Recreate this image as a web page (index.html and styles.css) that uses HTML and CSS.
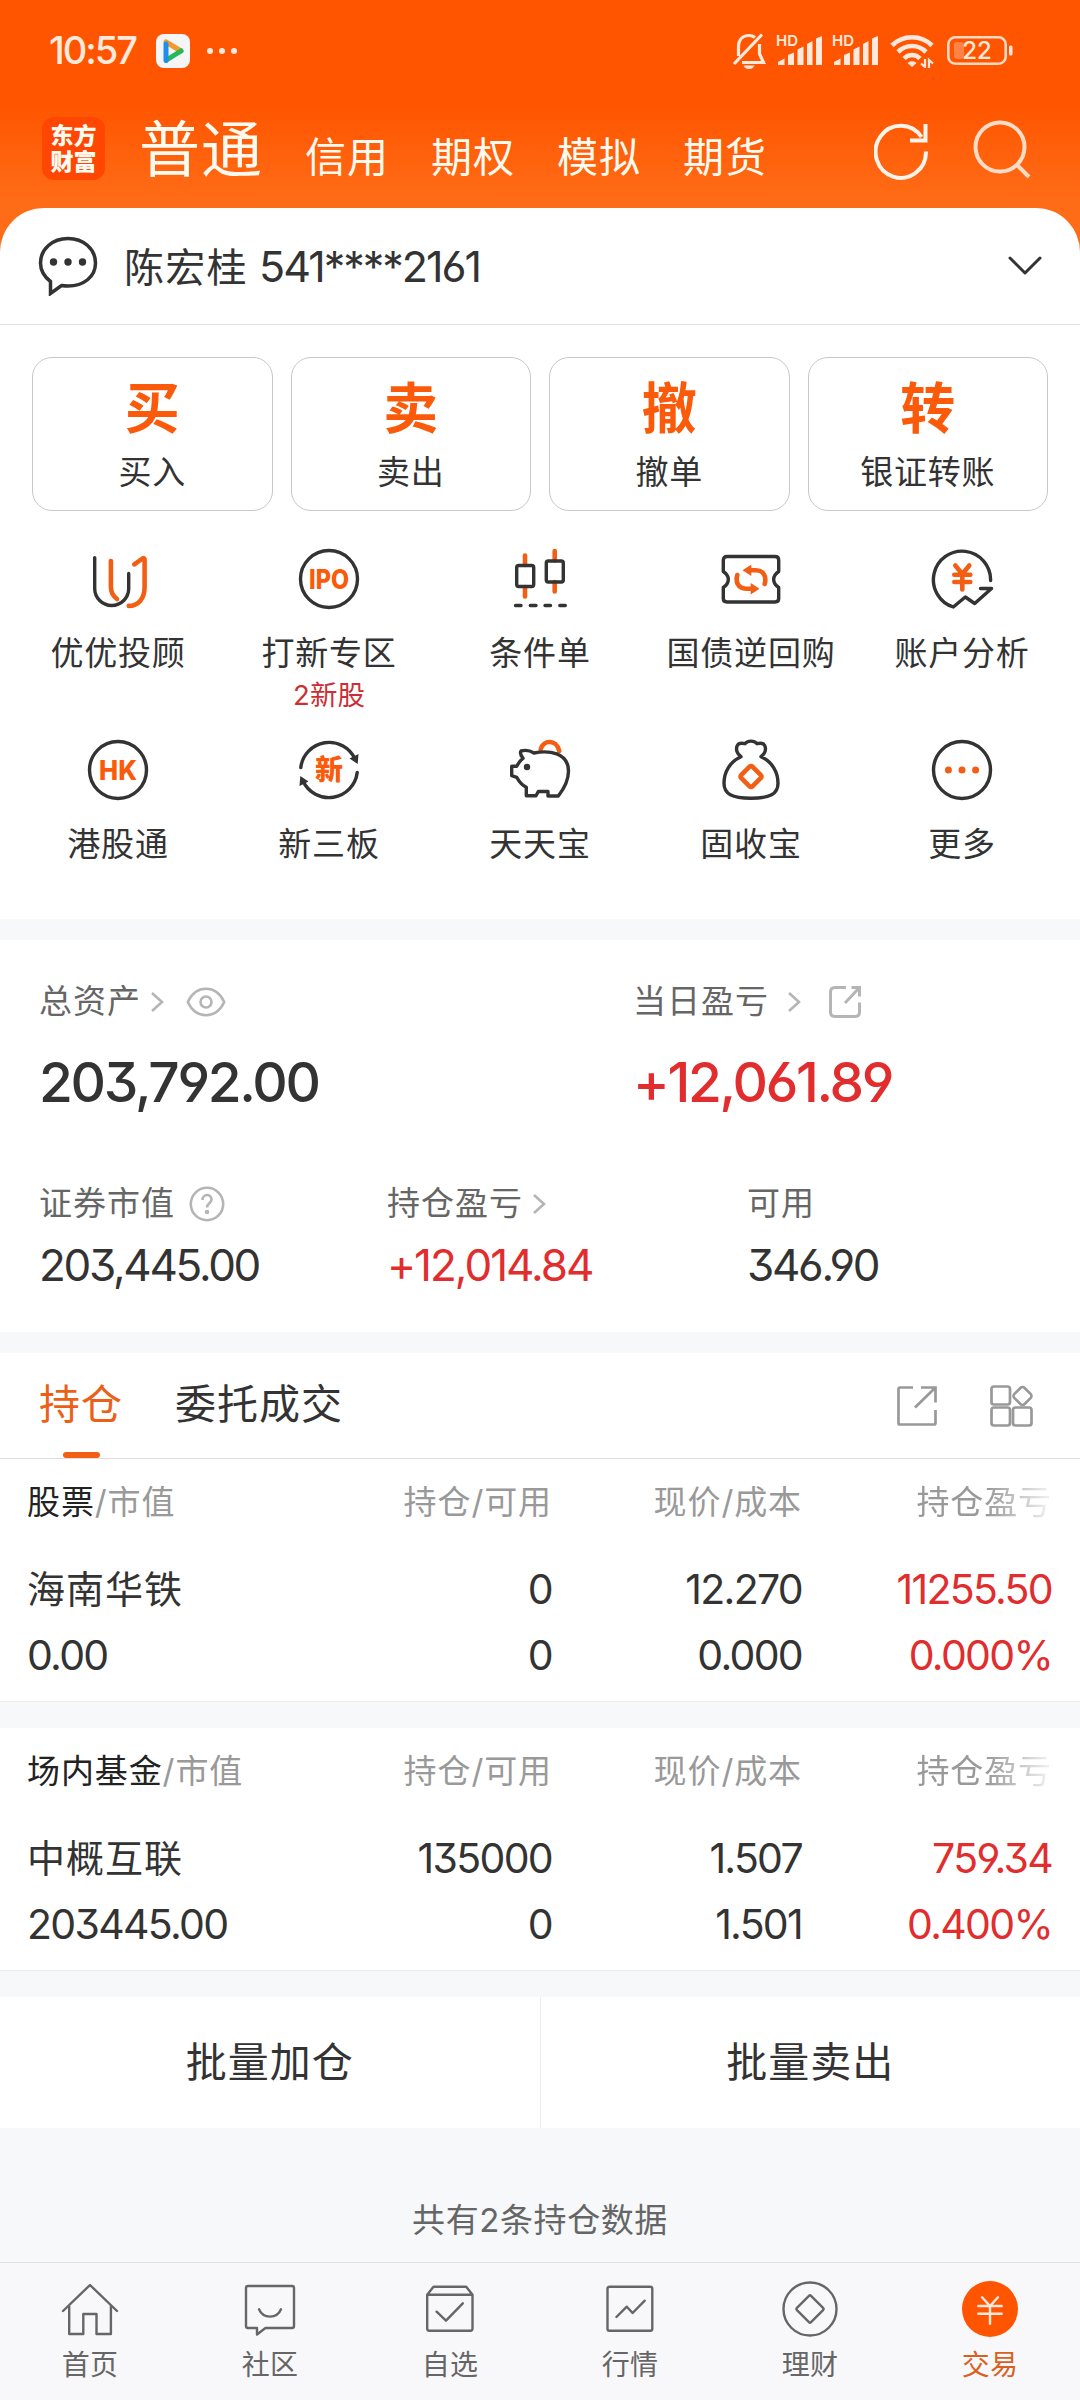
FILE: index.html
```html
<!DOCTYPE html>
<html lang="zh-CN">
<head>
  <meta charset="UTF-8" />
  <title>交易</title>
  <meta name="viewport" content="width=device-width, initial-scale=1.0"/>
  <link rel="stylesheet" href="styles.css">
</head>
<body>
  <!-- 顶部 -->
  <div class="top">
    <div class="status-bar">
      <span class="time">10:57</span>
      <svg class="app-icon" width="34" height="34" viewBox="0 0 34 34">
        <rect width="34" height="34" rx="8" fill="#f3f5f7"/>
        <path d="M10 8L25 17" stroke="#f39a2d" stroke-width="5" stroke-linecap="round"/>
        <path d="M25 17L10.500 26" stroke="#22b95a" stroke-width="5" stroke-linecap="round"/>
        <path d="M10 10V26.500" stroke="#1e8fe8" stroke-width="5" stroke-linecap="round"/>
      </svg>
      <svg class="dots" width="32" height="8" viewBox="0 0 32 8" fill="#ffe9dc">
        <circle cx="4" cy="4" r="3"/><circle cx="16" cy="4" r="3"/><circle cx="28" cy="4" r="3"/>
      </svg>
      <div class="status-right">
        <svg width="34" height="38" viewBox="0 0 34 38" fill="none" stroke="#ffe9dc" stroke-width="3.200">
          <path d="M6.500 24V15C6.500 8 10.500 3.500 17 3.500C19.500 3.500 21.500 4.300 23 5.500M27.500 12V22L31.500 30.500H10M2 32L30 2.500"/>
          <path d="M11.500 33.500H22.500C21.500 36 19.500 37 17 37C14.500 37 12.500 36 11.500 33.500Z" fill="#ffe9dc" stroke="none"/>
        </svg>
        <svg class="signal" width="46" height="38" viewBox="0 -2 46 38" fill="#ffe9dc">
          <text x="0" y="12" class="hd">HD</text>
          <path d="M2 31V28L8.500 24.500V31ZM12 31V21L18 18.500V31ZM21.500 31V15.500L27.500 12.500V31ZM31 31V10L36.500 7V31ZM40 31V4.500L46 2V31Z"/>
        </svg>
        <svg class="signal" width="46" height="38" viewBox="0 -2 46 38" fill="#ffe9dc">
          <text x="0" y="12" class="hd">HD</text>
          <path d="M2 31V28L8.500 24.500V31ZM12 31V21L18 18.500V31ZM21.500 31V15.500L27.500 12.500V31ZM31 31V10L36.500 7V31ZM40 31V4.500L46 2V31Z"/>
        </svg>
        <svg class="wifi" width="44" height="34" viewBox="0 0 44 34" fill="none" stroke="#ffe9dc" stroke-width="4.600">
          <path d="M2 11.500C13 0.500 31 0.500 42 11.500M8 18C16 10 28 10 36 18M14 24.500C18.500 19.800 25.500 19.800 30 24.500"/>
          <path d="M17.500 29C20 26.500 24 26.500 26.500 29L22 33Z" fill="#ffe9dc" stroke="none"/>
          <path d="M35 25V33L31 29.500M39 34V26L43 29.500" stroke-width="2.200"/>
        </svg>
        <svg width="66" height="30" viewBox="0 0 66 30">
          <rect x="1.300" y="1.300" width="57.400" height="26.400" rx="7" fill="none" stroke="#ffd9c3" stroke-width="2.600"/>
          <rect x="7" y="6" width="10" height="17" rx="3" fill="#ff8345"/>
          <rect x="62" y="9.500" width="3.500" height="10" rx="1.500" fill="#ffe9dc"/>
          <text x="30" y="23" class="battery-num">22</text>
        </svg>
      </div>
    </div>

    <div class="header">
      <div class="brand">东方<br>财富</div>
      <div class="account-tabs">
        <span class="current">普通</span>
        <span>信用</span>
        <span>期权</span>
        <span>模拟</span>
        <span>期货</span>
      </div>
      <svg class="refresh" width="56" height="60" viewBox="0 0 56 60" fill="none" stroke="#fff3ea" stroke-width="4">
        <path d="M52 31.500A25.200 26 0 1 1 47.500 17"/>
        <path d="M51.500 4V20.500H36"/>
      </svg>
      <svg class="search" width="58" height="60" viewBox="0 0 58 60" fill="none" stroke="#ffdcc6" stroke-width="4">
        <circle cx="27" cy="27" r="24.500"/>
        <path d="M43 44L56 57"/>
      </svg>
    </div>
  </div>

  <!-- 账户 -->
  <div class="account">
    <svg width="60" height="60" viewBox="0 0 60 60" fill="none" stroke="#333" stroke-width="3.500">
      <path d="M12.500 57.500V45.500C6 40.500 2.500 34 2.500 27C2.500 13 14.500 2.500 30 2.500S57.500 13 57.500 27S45.500 50 30 50C27.500 50 25.500 49.800 23.500 49.500Z"/>
      <g fill="#333" stroke="none"><circle cx="15.500" cy="26" r="3.700"/><circle cx="30" cy="26" r="3.700"/><circle cx="44.500" cy="26" r="3.700"/></g>
    </svg>
    <div class="account-name">陈宏桂 <span class="account-no">541****2161</span></div>
    <svg class="arrow-down" width="34" height="20" viewBox="0 0 34 20" fill="none" stroke="#333" stroke-width="3" stroke-linecap="round" stroke-linejoin="round">
      <path d="M2 2L17 17L32 2"/>
    </svg>
  </div>

  <div class="trade">
    <!-- 买卖按钮 -->
    <div class="trade-buttons">
      <div class="trade-btn"><b>买</b><span>买入</span></div>
      <div class="trade-btn"><b>卖</b><span>卖出</span></div>
      <div class="trade-btn"><b>撤</b><span>撤单</span></div>
      <div class="trade-btn"><b>转</b><span>银证转账</span></div>
    </div>

    <!-- 功能入口 -->
    <div class="menu">
      <div class="menu-item">
        <svg class="icon" viewBox="0 0 64 64">
          <path d="M8.700 10.600V41.500A17 17 0 0 0 42.700 41.500V26.400"/>
          <path class="o" d="M24.900 14V40C24.900 45 27 49 31 52M48.300 17.400L56.500 11.500C57.700 10.800 58.600 11.200 58.600 12.500V40C58.600 52 52 58.900 42.800 58.900"/>
        </svg>
        <span>优优投顾</span>
      </div>
      <div class="menu-item">
        <svg class="icon" viewBox="0 0 64 64">
          <circle cx="32" cy="32" r="28.500"/>
          <text x="32" y="41.500" class="icon-text" textLength="40" lengthAdjust="spacingAndGlyphs">IPO</text>
        </svg>
        <span>打新专区</span>
        <em>2新股</em>
      </div>
      <div class="menu-item">
        <svg class="icon" viewBox="0 0 64 64">
          <path class="o" d="M17 8.500V18M17 40V49.500M46.700 4V13.500M46.700 35V44.500"/>
          <rect x="8.700" y="18.500" width="17" height="21" rx="2"/>
          <rect x="38.300" y="14" width="17" height="21" rx="2"/>
          <path d="M7.500 58.500H13M22.300 58.500H28M37 58.500H42.500M51.800 58.500H57.300"/>
        </svg>
        <span>条件单</span>
      </div>
      <div class="menu-item">
        <svg class="icon" viewBox="0 0 64 64">
          <path d="M8 9.500H56Q59.700 9.500 59.700 13V24.500C53 29 53 36 59.700 40.500V51.500Q59.700 55 56 55H8Q4.300 55 4.300 51.500V40.500C11 36 11 29 4.300 24.500V13Q4.300 9.500 8 9.500Z"/>
          <path class="o" d="M18.300 28C16.300 35 19 41.700 27 41.700H33M45.700 37C47.700 30 45 23.300 37 23.300H31"/>
          <path class="of" d="M31.700 36L40.500 41.700L31.700 47.500ZM32.300 29L23.500 23.300L32.300 17.500Z"/>
        </svg>
        <span>国债逆回购</span>
      </div>
      <div class="menu-item">
        <svg class="icon" viewBox="0 0 64 64">
          <path d="M60.600 33.500A28.600 28.600 0 1 0 23.300 60L35.300 50L44.700 56.500L61.500 41.500H50.500"/>
          <path class="o" d="M25.300 18.500L32.300 27L39.300 18.500M32.300 27V42.500M24.300 27.800H40.300M24.300 35H40.300"/>
        </svg>
        <span>账户分析</span>
      </div>
      <div class="menu-item">
        <svg class="icon" viewBox="0 0 64 64">
          <circle cx="32" cy="32" r="28.500"/>
          <text x="32" y="41.500" class="icon-text" textLength="38" lengthAdjust="spacingAndGlyphs">HK</text>
        </svg>
        <span>港股通</span>
      </div>
      <div class="menu-item">
        <svg class="icon" viewBox="0 0 64 64">
          <path d="M3.800 29.500A28.500 28.500 0 0 1 58 21M60.200 34.500A28.500 28.500 0 0 1 6 43"/>
          <path class="df" d="M52.500 20.500L61.500 16L60.700 26ZM11.500 43.500L2.500 48L3.300 38Z"/>
          <text x="32" y="42" class="icon-text xin">新</text>
        </svg>
        <span>新三板</span>
      </div>
      <div class="menu-item">
        <svg class="icon" viewBox="0 0 64 64">
          <path class="o" d="M32.700 11.300C35 2 48.500 0.500 51.300 13"/>
          <path d="M15 20.300C13.300 18 11.800 14.500 13 13C17 11.800 22 12.500 26 15C33 13.500 42 13.500 48.700 15.800C57 19 60.500 26 60.500 33C60.500 43 55 52 50.300 58H40V53.500H30.300L28 57.700H18.300V49.300C14.500 47.500 11 43.500 8.700 39.300L3.700 37.700V28.300H8.700C10.500 25 12.500 22 15 20.300Z"/>
          <circle class="df" cx="19" cy="29" r="3.200"/>
        </svg>
        <span>天天宝</span>
      </div>
      <div class="menu-item">
        <svg class="icon" viewBox="0 0 64 64">
          <path d="M22 18.700C18 16 16.500 11 18.300 7.500C20 4.500 23.500 5 26 5.700C29 2.300 35 2.300 38 5.700C40.500 5 44 4.500 45.700 7.500C47.500 11 46 16 42 18.700C53 23.500 59 34 59 45.300C59 56 51 60.300 32 60.300S5 56 5 45.300C5 34 11 23.500 22 18.700Z"/>
          <rect class="o" x="24" y="30.500" width="16" height="16" rx="2" transform="rotate(45 32 38.500)"/>
        </svg>
        <span>固收宝</span>
      </div>
      <div class="menu-item">
        <svg class="icon" viewBox="0 0 64 64">
          <circle cx="32" cy="32" r="28.500"/>
          <g class="of"><circle cx="18.400" cy="32" r="3.500"/><circle cx="32" cy="32" r="3.500"/><circle cx="45.600" cy="32" r="3.500"/></g>
        </svg>
        <span>更多</span>
      </div>
    </div>
  </div>

  <!-- 资产 -->
  <div class="assets">
    <div class="assets-main">
      <div class="asset">
        <div class="label">总资产
          <svg class="more" width="14" height="22" viewBox="0 0 14 22"><path d="M2 2L12 11L2 20"/></svg>
          <svg class="eye" width="40" height="30" viewBox="0 0 40 30">
            <path d="M1.800 15C6 6 12.500 1.800 20 1.800S34 6 38.200 15C34 24 27.500 28.200 20 28.200S6 24 1.800 15Z"/><circle cx="20" cy="15" r="5.500"/>
          </svg>
        </div>
        <div class="total">203,792.00</div>
      </div>
      <div class="asset">
        <div class="label">当日盈亏
          <svg class="more wide" width="14" height="22" viewBox="0 0 14 22"><path d="M2 2L12 11L2 20"/></svg>
          <svg class="share" width="34" height="34" viewBox="0 0 34 34">
            <path d="M18 2.500H7Q2.500 2.500 2.500 7V27Q2.500 31.500 7 31.500H27Q31.500 31.500 31.500 27V17.500M23.500 2.500H31.500V11.500M31.500 2.500L17 18"/>
          </svg>
        </div>
        <div class="total up">+12,061.89</div>
      </div>
    </div>
    <div class="assets-sub">
      <div class="asset">
        <div class="label">证券市值
          <svg class="help" width="36" height="36" viewBox="0 0 36 36">
            <circle cx="18" cy="18" r="16.200"/>
            <path d="M13.500 14C13.500 7.500 22.500 7.500 22.500 13.500C22.500 17.500 18 17 18 21.500"/><circle class="pt" cx="18" cy="26" r="1"/>
          </svg>
        </div>
        <div class="value">203,445.00</div>
      </div>
      <div class="asset">
        <div class="label">持仓盈亏
          <svg class="more" width="14" height="22" viewBox="0 0 14 22"><path d="M2 2L12 11L2 20"/></svg>
        </div>
        <div class="value up">+12,014.84</div>
      </div>
      <div class="asset">
        <div class="label">可用</div>
        <div class="value">346.90</div>
      </div>
    </div>
  </div>

  <!-- 持仓列表 -->
  <div class="tabs">
    <span class="tab active">持仓</span>
    <span class="tab">委托成交</span>
    <svg class="tab-share" width="42" height="42" viewBox="0 0 42 42">
      <path d="M17 2.500H4Q2.500 2.500 2.500 4V38Q2.500 39.500 4 39.500H38Q39.500 39.500 39.500 38V25M25 2.500H39.500V17.500M39.500 2.500L19 22.500"/>
    </svg>
    <svg class="tab-grid" width="44" height="42" viewBox="0 0 44 42">
      <rect x="1.500" y="1.500" width="18.500" height="18" rx="2.500"/>
      <rect x="1.500" y="22.500" width="18.500" height="18" rx="2.500"/>
      <rect x="23" y="22.500" width="18.500" height="18" rx="2.500"/>
      <rect x="25.300" y="3.800" width="14.400" height="14.400" rx="3" transform="rotate(45 32.500 11)"/>
    </svg>
  </div>
  <div class="holdings">
    <div class="row head"><span class="kind"><b>股票</b>/市值</span><span>持仓/可用</span><span>现价/成本</span><span class="fade">持仓盈亏</span></div>
    <div class="row"><span class="name">海南华铁</span><span>0</span><span>12.270</span><span class="up">11255.50</span></div>
    <div class="row second"><span>0.00</span><span>0</span><span>0.000</span><span class="up">0.000%</span></div>
  </div>
  <div class="holdings fund">
    <div class="row head"><span class="kind"><b>场内基金</b>/市值</span><span>持仓/可用</span><span>现价/成本</span><span class="fade">持仓盈亏</span></div>
    <div class="row"><span class="name">中概互联</span><span>135000</span><span>1.507</span><span class="up">759.34</span></div>
    <div class="row second"><span>203445.00</span><span>0</span><span>1.501</span><span class="up">0.400%</span></div>
  </div>

  <div class="batch">
    <div>批量加仓</div>
    <div>批量卖出</div>
  </div>
  <div class="summary">共有2条持仓数据</div>

  <!-- 底部导航 -->
  <div class="nav">
    <div class="nav-item">
      <svg viewBox="0 0 60 60"><path d="M3 32L30 6L57 32M9.200 27V55H23.300V35H36.500V55H50.900V27"/></svg>
      <span>首页</span>
    </div>
    <div class="nav-item">
      <svg viewBox="0 0 60 60"><path d="M8 7H52Q54 7 54 9V47Q54 49 52 49H25.500L17 55.500V49H8Q6 49 6 47V9Q6 7 8 7ZM19 30.300C23 40 37 40 41 30.300"/></svg>
      <span>社区</span>
    </div>
    <div class="nav-item">
      <svg viewBox="0 0 60 60"><path d="M7.200 15.700H52.500V49.500Q52.500 51.700 50.500 51.700H9.200Q7.200 51.700 7.200 49.500V15.700L13.500 7.700H46.200L52.500 15.700M16.600 32.700L26 41.700L42.800 24.300"/></svg>
      <span>自选</span>
    </div>
    <div class="nav-item">
      <svg viewBox="0 0 60 60"><rect x="7.500" y="7.700" width="44.800" height="44" rx="2"/><path d="M16.400 38L26.800 27.700L32.600 34L44.700 21.700"/></svg>
      <span>行情</span>
    </div>
    <div class="nav-item">
      <svg viewBox="0 0 60 60"><circle cx="30" cy="30" r="26.500"/><rect x="20" y="20" width="20" height="20" rx="1.500" transform="rotate(45 30 30)"/></svg>
      <span>理财</span>
    </div>
    <div class="nav-item on">
      <svg viewBox="0 0 60 60"><circle cx="30" cy="30" r="28"/><path d="M22 18.300L30 27L38 18.300M30 27V44.700M18.300 27H41.700M18.300 34.700H41.700"/></svg>
      <span>交易</span>
    </div>
  </div>
</body>
</html>
```

FILE: styles.css
```css
body {
  font-family: Inter, "Noto Sans CJK SC", sans-serif;
  /* MiSans 风格数字：开口 6/9，平顶 3 */
  font-feature-settings: "cv03", "cv04", "cv09";
  background: #f7f8fa;
  color: #333;
  margin: 0;
  padding: 0;
  width: 1080px;
  height: 2400px;
  overflow: hidden;
  display: flex;
  flex-direction: column;
}
svg {
  display: block;
  flex: none;
}
.up {
  color: #e12d2d;
}

/* ======================
   顶部
   ====================== */
.top {
  height: 252px;
  flex: none;
  background: linear-gradient(#ff5500 0, #ff5500 105px, #ff6c17 200px, #ff6c17 252px);
}
.status-bar {
  height: 100px;
  box-sizing: border-box;
  padding: 2px 67px 0 49px;
  display: flex;
  align-items: center;
  color: #ffe9dc;
}
.time {
  width: 107px;
  font-size: 38px;
  letter-spacing: -2px;
  font-weight: 500;
  line-height: 48px;
  margin-bottom: 2px;
}
.dots {
  margin-left: 16px;
}
.status-right {
  display: flex;
  align-items: center;
  margin-left: auto;
}
.signal {
  margin-left: 10px;
}
.wifi {
  margin: 0 13px 0 12px;
}
.hd {
  font-size: 15px;
  font-weight: 600;
}
.battery-num {
  font-size: 24px;
  font-weight: 500;
  fill: #ffe9dc;
  text-anchor: middle;
}

.header {
  height: 108px;
  padding: 0 49px 0 42px;
  display: flex;
  align-items: flex-start;
  color: #fffaf0;
}
.brand {
  width: 63px;
  height: 63px;
  box-sizing: border-box;
  padding-top: 4px;
  margin-top: 17px;
  border-radius: 12px;
  background: #ff4602;
  font-family: "Noto Sans CJK SC", sans-serif;
  font-size: 23px;
  line-height: 26px;
  font-weight: 900;
  text-align: center;
}
.account-tabs {
  display: flex;
  align-items: baseline;
  margin-left: 34px;
  font-size: 41px;
  letter-spacing: 1px;
  line-height: 100px;
}
.account-tabs span {
  margin-right: 42px;
}
.account-tabs .current {
  font-size: 61px;
  letter-spacing: 1px;
}
.refresh {
  margin: 20px 0 0 auto;
}
.search {
  margin: 20px 0 0 43px;
}

/* ======================
   账户
   ====================== */
.account {
  height: 116px;
  flex: none;
  margin-top: -44px;
  padding: 0 38px;
  display: flex;
  align-items: center;
  background: #fff;
  border-radius: 44px 44px 0 0;
  border-bottom: 1px solid #e3e3e3;
}
.account-name {
  flex: 1;
  margin-left: 26px;
  padding-bottom: 3px;
  font-size: 40px;
  letter-spacing: 1.200px;
  white-space: nowrap;
}
.account-no {
  font-size: 43px;
  letter-spacing: -2px;
  margin-left: -1px;
}

/* ======================
   交易入口
   ====================== */
.trade {
  height: 594px;
  flex: none;
  background: #fff;
}
.trade-buttons {
  display: grid;
  grid-template-columns: repeat(4, 1fr);
  gap: 18px;
  padding: 32px 32px 0;
}
.trade-btn {
  height: 152px;
  border: 1px solid #c8c8c8;
  border-radius: 20px;
  display: flex;
  flex-direction: column;
  align-items: center;
}
.trade-btn b {
  margin-top: 19px;
  font-size: 55px;
  line-height: 62px;
  font-weight: 700;
  color: #fa5a0a;
}
.trade-btn span {
  margin-top: 11px;
  font-size: 33px;
  line-height: 44px;
  letter-spacing: 0.800px;
}
.menu {
  display: grid;
  grid-template-columns: repeat(5, 211px);
  grid-auto-rows: 191px;
  justify-content: center;
  padding-top: 36px;
}
.menu-item {
  display: flex;
  flex-direction: column;
  align-items: center;
  font-size: 33px;
  letter-spacing: 0.800px;
  line-height: 44px;
  white-space: nowrap;
}
.menu-item span {
  margin-top: 20px;
}
.menu-item em {
  font-style: normal;
  font-size: 27.500px;
  line-height: 40px;
  letter-spacing: 0;
  color: #cc2f33;
}
.icon {
  width: 64px;
  height: 64px;
  fill: none;
  stroke: #333;
  stroke-width: 3.400px;
  stroke-linecap: round;
  stroke-linejoin: round;
}
.icon .o {
  stroke: #f25f14;
  stroke-width: 4.600px;
}
.icon .of {
  fill: #f25f14;
  stroke: none;
}
.icon .df {
  fill: #333;
  stroke: none;
}
.icon-text {
  font-size: 27px;
  font-weight: 800;
  fill: #fa5a0a;
  stroke: none;
  letter-spacing: 0;
  text-anchor: middle;
}
.icon-text.xin {
  font-size: 28px;
}

/* ======================
   资产
   ====================== */
.assets {
  height: 392px;
  flex: none;
  margin-top: 21px;
  background: #fff;
}
.assets-main,
.assets-sub {
  display: grid;
  padding-left: 39px;
}
.assets-main {
  grid-template-columns: 594px 1fr;
  padding-top: 38px;
  height: 163px;
}
.assets-sub {
  grid-template-columns: 348px 360px 1fr;
  padding-top: 39px;
}
.label {
  display: flex;
  align-items: center;
  height: 46px;
  line-height: 44px;
  padding-bottom: 1px;
  box-sizing: border-box;
  font-size: 33px;
  letter-spacing: 1px;
  color: #666;
}
.label svg {
  position: relative;
  top: 1px;
  fill: none;
  stroke: #b5b5b5;
  stroke-width: 2.600px;
}
.label .more {
  margin-left: 9px;
}
.label .wide {
  margin-left: 18px;
}
.label .eye {
  margin-left: 22px;
}
.label .share {
  margin-left: 27px;
  stroke-width: 3px;
}
.label .help {
  margin-left: 14px;
}
.label .pt {
  fill: #b5b5b5;
}
.total {
  margin-top: 27px;
  font-size: 55px;
  font-weight: 450;
  line-height: 62px;
  letter-spacing: -2.300px;
}
.value {
  margin-top: 14px;
  font-size: 44px;
  line-height: 50px;
  letter-spacing: -2.300px;
}
.value.up {
  letter-spacing: -2px;
}

/* ======================
   持仓
   ====================== */
.tabs {
  height: 105px;
  flex: none;
  margin-top: 21px;
  padding: 0 46px 0 39px;
  display: flex;
  align-items: center;
  background: #fff;
  border-bottom: 1px solid #dedede;
  font-size: 41px;
  letter-spacing: 1px;
}
.tab {
  margin-right: 52px;
  line-height: 103px;
  padding-bottom: 2px;
}
.tab.active {
  position: relative;
  color: #eb6016;
}
.tab.active::after {
  content: "";
  position: absolute;
  left: 24px;
  bottom: 0;
  width: 37px;
  height: 6px;
  border-radius: 3px;
  background: #f25f14;
}
.tabs svg {
  fill: none;
  stroke: #999;
  stroke-width: 2.700px;
}
.tab-share {
  margin-left: auto;
}
.tab-grid {
  margin-left: 52px;
}
.holdings {
  height: 242px;
  flex: none;
  background: #fff;
  border-bottom: 1px solid #ececec;
}
.holdings.fund {
  margin-top: 26px;
}
.row {
  display: grid;
  grid-template-columns: 275px 250px 250px 250px;
  padding: 31px 0 0 27px;
  font-size: 41px;
  line-height: 66px;
  letter-spacing: -1.700px;
  white-space: nowrap;
}
.row.second {
  padding-top: 0;
}
.row span:not(:first-child) {
  text-align: right;
}
.row .name {
  font-size: 38px;
  letter-spacing: 1px;
}
.row.head {
  padding-top: 20px;
  font-size: 33px;
  line-height: 46px;
  letter-spacing: 0.900px;
  color: #999;
}
.row.head b {
  font-weight: 400;
  color: #222;
}
.fade {
  -webkit-mask-image: linear-gradient(to right, #000 185px, rgba(0,0,0,0.1) 250px);
  mask-image: linear-gradient(to right, #000 185px, rgba(0,0,0,0.1) 250px);
}
.batch {
  height: 131px;
  flex: none;
  margin-top: 26px;
  display: flex;
  background: #fff;
  font-size: 41px;
  letter-spacing: 1px;
  line-height: 130px;
  text-align: center;
}
.batch div {
  flex: 1;
}
.batch div:first-child {
  border-right: 1px solid #ececec;
}
.summary {
  height: 134px;
  flex: none;
  box-sizing: border-box;
  padding-top: 69px;
  font-size: 33px;
  line-height: 46px;
  letter-spacing: 0.600px;
  text-align: center;
  color: #666;
}

/* ======================
   底部导航
   ====================== */
.nav {
  flex: 1;
  display: flex;
  background: #f8f8fb;
  border-top: 1px solid #e2e3e5;
}
.nav-item {
  flex: 1;
  padding-top: 16px;
  display: flex;
  flex-direction: column;
  align-items: center;
  font-size: 28px;
  line-height: 38px;
  letter-spacing: 0.300px;
  color: #666;
}
.nav-item svg {
  width: 60px;
  height: 60px;
  margin-bottom: 7px;
  fill: none;
  stroke: #666;
  stroke-width: 2.400px;
  stroke-linecap: round;
  stroke-linejoin: round;
}
.nav-item.on {
  color: #d9611f;
}
.nav-item.on circle {
  fill: #ff5500;
  stroke: none;
}
.nav-item.on path {
  stroke: #ffe9dc;
}
```
